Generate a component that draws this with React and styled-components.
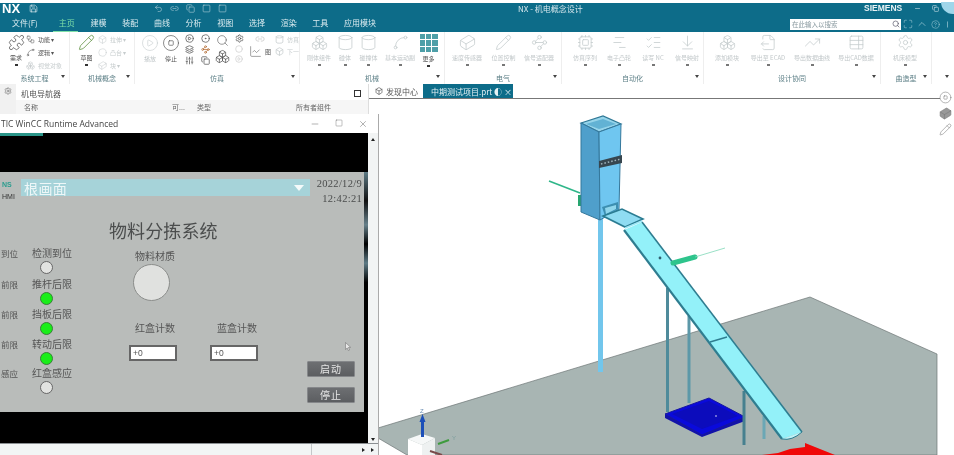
import React from 'react';
import styled, { createGlobalStyle } from 'styled-components';
import {
  Puzzle, Pencil, Square, Search, Settings, Box, Boxes, Spline, Cylinder, Cuboid, Workflow,
  ChartLine, ChartNoAxesGantt, Cpu, Waypoints, ListChecks, ArrowDownToLine, FileOutput,
  TrendingUp, TableProperties, Wrench, ChevronUp, Maximize, CircleHelp, Circle, Save, Undo2, Minus, X,
  Sliders, Link2, CircleDot, CirclePlay, CircleStop, Copy, Layers,
} from 'lucide-react';

const TEAL = '#0d6c89';
const CJK = '"Noto Sans CJK SC", "Liberation Sans", sans-serif';
const SERIF = '"Liberation Serif", "Noto Sans CJK SC", serif';

const GlobalStyle = createGlobalStyle`
  html, body { margin: 0; padding: 0; background: #fff; overflow: hidden; }
  #root { width: 954px; height: 455px; }
  * { box-sizing: border-box; }
`;

const Page = styled.div`
  width: 954px;
  height: 455px;
  padding-top: 3px;
  display: flex;
  flex-direction: column;
  overflow: hidden;
  background: #fff;
  font-family: ${CJK};
  filter: blur(0.45px);
`;

/* header */
const TitleBar = styled.div`
  height: 13px;
  flex: none;
  background: ${TEAL};
  display: flex;
  align-items: center;
  padding-bottom: 3px;
  color: #fff;
`;
const TitleLeft = styled.div`
  width: 518px;
  display: flex;
  align-items: center;
  padding-left: 2px;
`;
const Logo = styled.span`
  font: bold 13px "Liberation Sans", sans-serif;
  width: 27px;
`;
const QuickIcons = styled.div`
  display: flex;
  gap: 7px;
  margin-left: 116px;
  opacity: 0.75;
`;
const AppTitle = styled.div`
  width: 346px;
  font-size: 8px;
  color: #d5e6ec;
`;
const Brand = styled.div`
  font: bold 8.5px "Liberation Sans", sans-serif;
  width: 50px;
  color: #e8f2f5;
`;
const WinControls = styled.div`
  display: flex;
  gap: 11px;
  align-items: center;
  color: #cfe2e8;
`;
const Sphere = styled.div`
  position: absolute;
  top: 2px;
  right: 0;
  width: 13px;
  height: 12px;
  border-radius: 0 0 0 13px;
  background: #9fd6ea;
`;
const MenuBar = styled.div`
  height: 16px;
  flex: none;
  background: ${TEAL};
  display: flex;
  align-items: center;
  padding-left: 12px;
  color: #dcecf0;
  font-size: 8px;
`;
const MenuItem = styled.div`
  height: 16px;
  line-height: 14px;
  margin-right: ${p => p.$gap || 15.7}px;
  position: relative;
  color: ${p => (p.$active ? '#7fe0a8' : 'inherit')};
  &::after {
    content: '';
    display: ${p => (p.$active ? 'block' : 'none')};
    position: absolute;
    left: -6px;
    right: -3px;
    bottom: 0;
    height: 1px;
    background: #7fe0a8;
  }
`;
const MenuSpacer = styled.div`
  flex: 1;
`;
const SearchBox = styled.div`
  width: 111px;
  height: 11px;
  background: #fff;
  color: #8a9aa0;
  font-size: 6.5px;
  line-height: 11px;
  padding: 0 1px 0 2px;
  display: flex;
  justify-content: space-between;
  align-items: center;
`;
const HeadIcons = styled.div`
  display: flex;
  align-items: center;
  gap: 3px;
  margin: 0 2px 0 2px;
  width: 49px;
  justify-content: space-between;
  color: #b9dbe4;
`;

/* ribbon */
const Ribbon = styled.div`
  height: 52px;
  flex: none;
  display: flex;
  background: #fff;
`;
const Group = styled.div`
  width: ${p => p.$w}px;
  flex: none;
  display: flex;
  flex-direction: column;
  border-right: 1px solid ${p => (p.$plain ? 'transparent' : '#eeeeee')};
`;
const Tools = styled.div`
  height: 39px;
  display: flex;
  padding-left: ${p => p.$pad || 0}px;
`;
const GroupFoot = styled.div`
  height: 13px;
  display: flex;
  align-items: center;
  justify-content: center;
  position: relative;
  font-size: 7px;
  color: #5c7f86;
`;
const FootCaret = styled.span`
  position: absolute;
  right: 4px;
  top: 4px;
  width: 0;
  height: 0;
  border-left: 2px solid transparent;
  border-right: 2px solid transparent;
  border-top: 3px solid #444;
`;
const Tool = styled.div`
  width: ${p => p.$w || 34}px;
  flex: none;
  display: flex;
  flex-direction: column;
  align-items: center;
  padding-top: 2px;
  color: ${p => (p.$off ? '#c4cbcd' : '#555')};
`;
const ToolLabel = styled.div`
  margin-top: 3px;
  font-size: 6px;
  line-height: 8px;
  white-space: nowrap;
  color: ${p => (p.$off ? '#c2c8ca' : '#555')};
`;
const ToolCaret = styled.div`
  margin-top: 2px;
  width: 3px;
  height: 2px;
  background: ${p => (p.$off ? '#777' : '#333')};
`;
const SmallCol = styled.div`
  display: flex;
  flex-direction: column;
  gap: 3px;
  padding-top: 2px;
  width: ${p => p.$w}px;
`;
const SmallRow = styled.div`
  display: flex;
  align-items: center;
  gap: 3px;
  height: 10px;
  font-size: 6px;
  white-space: nowrap;
  color: ${p => (p.$off ? '#c6cccd' : '#555')};
`;
const IconCluster = styled.div`
  width: ${p => p.$w}px;
  display: grid;
  grid-template-columns: repeat(${p => p.$cols}, 1fr);
  gap: 2px;
  padding-top: 2px;
  justify-items: center;
  align-content: start;
  color: #555;
`;
const MoreGrid = styled.div`
  width: 18px;
  height: 18px;
  display: grid;
  grid-template-columns: repeat(3, 1fr);
  gap: 1px;
`;
const MoreCell = styled.span`
  background: #4e9fa8;
`;

/* work area */
const Workspace = styled.div`
  flex: 1;
  min-height: 0;
  display: flex;
  position: relative;
`;
const LeftPanel = styled.div`
  width: 369px;
  flex: none;
  display: flex;
`;
const Rail = styled.div`
  width: 16px;
  flex: none;
  background: #f1f1f1;
  display: flex;
  justify-content: center;
  padding-top: 3px;
  color: #777;
`;
const Navigator = styled.div`
  flex: 1;
  display: flex;
  flex-direction: column;
  padding-top: 2px;
  border-right: 1px solid #ddd;
`;
const NavHead = styled.div`
  height: 14px;
  display: flex;
  align-items: center;
  justify-content: space-between;
  padding: 0 7px 0 5px;
  font-size: 8px;
  color: #555;
`;
const NavBox = styled.span`
  width: 7px;
  height: 7px;
  border: 1px solid #333;
`;
const NavCols = styled.div`
  height: 14px;
  display: grid;
  grid-template-columns: 148px 25px 99px 1fr;
  align-items: center;
  padding-left: 8px;
  background: #f6f6f6;
  font-size: 7px;
  color: #666;
`;

/* floating WinCC window */
const HmiWindow = styled.div`
  position: absolute;
  left: 0;
  top: 30px;
  width: 379px;
  height: 341px;
  background: #f4f6f6;
  border-right: 1px solid #aaa;
  display: flex;
  flex-direction: column;
  overflow: hidden;
`;
const WinTitle = styled.div`
  height: 19px;
  flex: none;
  background: #fff;
  display: flex;
  align-items: center;
  justify-content: space-between;
  padding: 0 10px 0 1px;
  font: 8.5px "Open Sans", sans-serif;
  color: #444;
`;
const WinButtons = styled.div`
  display: flex;
  gap: 15px;
  color: #444;
`;
const WinMiddle = styled.div`
  height: 310px;
  flex: none;
  display: flex;
`;
const WinContent = styled.div`
  width: 368px;
  background: #000;
  display: flex;
  flex-direction: column;
`;
const Progress = styled.div`
  width: 43px;
  height: 3px;
  background: #2a9488;
`;
const BlackBand = styled.div`
  height: ${p => p.$h}px;
  flex: none;
  background: #000;
`;
const HmiRow = styled.div`
  height: 240px;
  flex: none;
  display: flex;
`;
const EdgeStrip = styled.div`
  flex: 1;
  background: linear-gradient(180deg, #5d7a85 0, #111 12%, #66808a 22%, #000 30%, #5d7a85 38%, #000 46%, #000 100%);
`;
const HmiScreen = styled.div`
  width: 364px;
  background: #b9bcba;
  position: relative;
  overflow: hidden;
  font-family: ${SERIF};
  color: #4a4c4c;
`;
const HmiHeader = styled.div`
  display: flex;
  align-items: flex-start;
  padding: 7px 2px 0 2px;
  height: 42px;
`;
const BrandBlock = styled.div`
  width: 19px;
  font: 7px/12px "Liberation Sans", sans-serif;
`;
const BrandTop = styled.div`
  color: #2c9d8f;
  font-weight: bold;
`;
const BrandBottom = styled.div`
  color: #333;
`;
const ScreenSelect = styled.div`
  width: 289px;
  height: 17px;
  background: #a6d3d9;
  color: #eef7f8;
  display: flex;
  align-items: center;
  justify-content: space-between;
  padding: 0 6px 0 3px;
  font: 14px ${CJK};
  letter-spacing: 0.4px;
`;
const SelectArrow = styled.span`
  width: 0;
  height: 0;
  border-left: 5px solid transparent;
  border-right: 5px solid transparent;
  border-top: 6px solid #f4fafa;
`;
const Clock = styled.div`
  flex: 1;
  text-align: right;
  font-size: 10.5px;
  line-height: 15px;
  margin-top: -3px;
  letter-spacing: 0.3px;
`;
const HmiTitle = styled.div`
  height: 33px;
  padding-left: 109px;
  font: 18px/33px ${CJK};
  color: #4b4d4d;
  letter-spacing: 0.1px;
`;
const HmiBody = styled.div`
  display: flex;
  align-items: flex-start;
`;
const CutColumn = styled.div`
  width: 18px;
  display: flex;
  flex-direction: column;
  align-items: flex-end;
`;
const LampColumn = styled.div`
  width: 58px;
  margin-left: 5px;
  display: flex;
  flex-direction: column;
  align-items: center;
`;
const LampCell = styled.div`
  height: ${p => p.$h}px;
  display: flex;
  flex-direction: column;
  align-items: center;
  flex: none;
`;
const LampLabel = styled.div`
  font: 10px/12px ${CJK};
  white-space: nowrap;
  color: #555;
  margin-left: ${p => p.$shift || 0}px;
`;
const CutLabel = styled.div`
  font: 8.5px/12px ${CJK};
  white-space: nowrap;
  color: #555;
`;
const Lamp = styled.div`
  width: 13px;
  height: 13px;
  margin: 2px 11px 0 0;
  border-radius: 50%;
  border: 1px solid ${p => (p.$on ? '#3a7d3a' : '#666')};
  background: ${p => (p.$on ? '#19ee19' : '#e2e3e1')};
`;
const CenterColumn = styled.div`
  width: 129px;
  margin-left: 48px;
  display: flex;
  flex-direction: column;
`;
const Material = styled.div`
  width: 48px;
  margin-left: 2px;
  display: flex;
  flex-direction: column;
  align-items: center;
  margin-top: 3px;
`;
const BigLamp = styled.div`
  width: 37px;
  height: 37px;
  margin: 2px 8px 0 0;
  border-radius: 50%;
  background: #e0e1df;
  border: 1px solid #8b8d8b;
`;
const Counters = styled.div`
  display: flex;
  gap: 33px;
  margin-top: 21px;
`;
const Counter = styled.div`
  width: 48px;
  display: flex;
  flex-direction: column;
  align-items: center;
  gap: 11px;
`;
const CountField = styled.div`
  width: 48px;
  height: 16px;
  background: #fff;
  border: 2px solid #666;
  font: 8.5px/12px "Liberation Sans", sans-serif;
  color: #555;
  padding-left: 2px;
`;
const ButtonColumn = styled.div`
  margin: 114px 0 0 49px;
  display: flex;
  flex-direction: column;
  gap: 10px;
`;
const HmiButton = styled.div`
  width: 48px;
  height: 16px;
  background: linear-gradient(#6d6f72, #5c5e61);
  border: 1px solid #85878a;
  border-radius: 1px;
  color: #e6e6e6;
  font: 10px/14px ${CJK};
  text-align: center;
  letter-spacing: 1px;
`;
const Pointer = styled.svg`
  position: absolute;
  left: 345px;
  top: 170px;
`;
const VScroll = styled.div`
  flex: 1;
  background: #f2f4f4;
  display: flex;
  flex-direction: column;
  justify-content: space-between;
  align-items: center;
  padding: 5px 0 2px;
`;
const ScrollUp = styled.span`
  width: 0;
  height: 0;
  border-left: 2.5px solid transparent;
  border-right: 2.5px solid transparent;
  border-bottom: 3px solid #222;
`;
const ScrollDown = styled(ScrollUp)`
  border-bottom: 0;
  border-top: 3px solid #222;
`;
const HScroll = styled.div`
  height: 12px;
  flex: none;
  background: #f2f5f5;
  border-top: 1px solid #8a8f92;
  display: flex;
  align-items: center;
  padding-left: 311px;
`;
const HScrollEnd = styled.div`
  flex: 1;
  height: 100%;
  border-left: 1px solid #c4c8ca;
  display: flex;
  justify-content: flex-end;
  align-items: center;
  gap: 6px;
  padding-right: 4px;
`;
const ScrollRight = styled.span`
  width: 0;
  height: 0;
  border-top: 2.5px solid transparent;
  border-bottom: 2.5px solid transparent;
  border-left: 3px solid #222;
`;

/* graphics window */
const Viewport = styled.div`
  flex: 1;
  min-width: 0;
  display: flex;
  flex-direction: column;
  position: relative;
`;
const TabStrip = styled.div`
  height: 15px;
  flex: none;
  display: flex;
  align-items: stretch;
  border-bottom: 1px solid #777;
  margin-right: 14px;
  padding-left: 3px;
  font-size: 8px;
  color: #555;
`;
const TabItem = styled.div`
  display: flex;
  align-items: center;
  gap: ${p => (p.$active ? 5 : 3)}px;
  height: 14px;
  padding: 0 3px;
  width: ${p => p.$w}px;
  background: ${p => (p.$active ? TEAL : 'transparent')};
  color: ${p => (p.$active ? '#e6f2f5' : 'inherit')};
  white-space: nowrap;
  overflow: hidden;
`;
const Scene = styled.svg`
  display: block;
  width: 585px;
  height: 356px;
  flex: none;
`;
const SideTools = styled.div`
  position: absolute;
  right: 2px;
  top: 7px;
  display: flex;
  flex-direction: column;
  gap: 3px;
  color: #777;
`;

const IC = { size: 9, strokeWidth: 1.4 };
const BIG = { size: 17, strokeWidth: 1.1 };

const RibbonTool = ({ icon: Icon, label, off = true, w }) => (
  <Tool $off={off} $w={w}>
    <Icon {...BIG} />
    <ToolLabel $off={off}>{label}</ToolLabel>
    <ToolCaret $off={off} />
  </Tool>
);

const SmallTool = ({ icon: Icon, label, off }) => (
  <SmallRow $off={off}>
    <Icon {...IC} />
    {label}
  </SmallRow>
);

const lampRows = [
  { cut: '到位', label: '检测到位', on: false, h: 31 },
  { cut: '前限', label: '推杆后限', on: true, h: 29.5 },
  { cut: '前限', label: '挡板后限', on: true, h: 30 },
  { cut: '前限', label: '转动后限', on: true, h: 29 },
  { cut: '感应', label: '红盒感应', on: false, h: 30 },
];

const menus = ['建模', '装配', '曲线', '分析', '视图', '选择', '渲染', '工具', '应用模块'];

const Scene3D = () => (
  <Scene viewBox="369 99 585 356">
    {/* floor */}
    <polygon points="810,297 937,354 937,455 407,455 378,438 378,428" fill="#a8b5b3" stroke="#6d7675" strokeWidth="0.7" />

    {/* posts behind the chute */}
    <line x1="600.5" y1="218" x2="600.5" y2="372" stroke="#72c6ec" strokeWidth="5" />
    <line x1="667.5" y1="288" x2="667.5" y2="412" stroke="#4f8b9b" strokeWidth="3" />
    <line x1="689" y1="316" x2="689" y2="403" stroke="#5c98a8" strokeWidth="3" />

    {/* blue tray */}
    <polygon points="665,414 665,418 702,437 745,421 745,417 702,433" fill="#1212a8" />
    <polygon points="665,414 709,398 745,417 702,435" fill="#0a0adb" stroke="#1616a0" strokeWidth="1" />
    <polygon points="672,414 709,401 738,416 702,429" fill="#0c0cbc" />
    <circle cx="716" cy="416" r="1" fill="#8c8ce0" />

    <line x1="744" y1="391" x2="744" y2="445" stroke="#47808f" strokeWidth="3" />
    <line x1="764" y1="416" x2="764" y2="439" stroke="#6ba7b5" strokeWidth="3" />

    {/* red tray */}
    <polygon points="762,455 778,453 790,449 805,447 805,443 835,455" fill="#f00808" />

    {/* left sensor */}
    <line x1="549" y1="181" x2="580" y2="193" stroke="#2fb689" strokeWidth="1.6" />
    <rect x="578" y="195" width="3" height="11" fill="#27a56f" />

    {/* hopper */}
    <polygon points="581,123 603,116 621,124 599,132" fill="#96d4ea" stroke="#2f7896" strokeWidth="1.2" />
    <polygon points="586,124 603,119 616,124 599,129" fill="#62b2d4" />
    <polygon points="581,123 599,132 600,220 581,212" fill="#4f9fcb" stroke="#35789c" strokeWidth="1" />
    <polygon points="599,132 621,124 619,209 600,220" fill="#6fc6f0" stroke="#35789c" strokeWidth="1" />
    <polygon points="602,207 618,202 618,209 605,216" fill="#3d8fb1" />
    <polygon points="605,208 616,205 616,209 606,214" fill="#8fd6ec" />
    <polygon points="599,161 622,155 622,163 599,168" fill="#37464f" />
    <line x1="601" y1="164" x2="621" y2="159" stroke="#9fb4bd" strokeWidth="1.5" strokeDasharray="1.5 2" />

    {/* upper chute */}
    <polygon points="603,216 622,209 643,219 625,227" fill="#8fdcf2" stroke="#2b7c92" strokeWidth="1.6" />

    {/* long chute */}
    <polygon points="624,230 642,222 802,432 782,439" fill="#93f1f9" />
    <line x1="624" y1="230" x2="782" y2="439" stroke="#2f7d90" strokeWidth="2.2" />
    <line x1="642" y1="222" x2="802" y2="432" stroke="#2f7d90" strokeWidth="1.6" />
    <line x1="625" y1="228" x2="642" y2="221" stroke="#9be6f5" strokeWidth="1.5" />
    <line x1="710" y1="342" x2="727" y2="337" stroke="#2f7d90" strokeWidth="1.4" />
    <path d="M782 439 Q792 441 802 432" fill="#bff3f8" stroke="#2f7d90" strokeWidth="1" />
    <circle cx="660" cy="258" r="1.4" fill="#2f5f70" />

    {/* right sensor */}
    <line x1="673" y1="263" x2="695" y2="257" stroke="#2ec48c" strokeWidth="5" strokeLinecap="round" />
    <line x1="695" y1="257" x2="725" y2="248" stroke="#7fd8b8" strokeWidth="0.8" />

    {/* triad */}
    <polygon points="408,439 422,434 435,438 422,445" fill="#f6f8f8" />
    <polygon points="408,439 422,445 422,455 408,455" fill="#fff" />
    <polygon points="422,445 435,438 435,455 422,455" fill="#eef1f1" />
    <line x1="422.5" y1="437" x2="422.5" y2="420" stroke="#1c4fb8" strokeWidth="3" />
    <polygon points="422.5,414 419.5,422 425.5,422" fill="#1c4fb8" />
    <text x="420" y="413" fontSize="6" fontFamily="Liberation Sans" fill="#6b8fb5">Z</text>
    <line x1="438" y1="444" x2="449" y2="440" stroke="#3e9b3e" strokeWidth="2" />
    <text x="452" y="440" fontSize="6" fontFamily="Liberation Sans" fill="#7d9c9c">Y</text>
    <line x1="430" y1="451" x2="442" y2="455" stroke="#7a4a4a" strokeWidth="2" />
  </Scene>
);

const App = () => (
  <Page>
    <GlobalStyle />
    <Sphere />
    <TitleBar>
      <TitleLeft>
        <Logo>NX</Logo>
        <Save size={9} strokeWidth={1.5} />
        <QuickIcons>
          <Undo2 {...IC} />
          <Link2 {...IC} />
          <Copy {...IC} />
          <Square {...IC} />
          <Square {...IC} />
        </QuickIcons>
      </TitleLeft>
      <AppTitle>NX - 机电概念设计</AppTitle>
      <Brand>SIEMENS</Brand>
      <WinControls>
        <Minus size={7} />
        <Copy size={7} />
      </WinControls>
    </TitleBar>
    <MenuBar>
      <MenuItem $gap={21}>文件(F)</MenuItem>
      <MenuItem $active>主页</MenuItem>
      {menus.map(m => <MenuItem key={m}>{m}</MenuItem>)}
      <MenuSpacer />
      <SearchBox>在此输入以搜索<Search size={8} color="#556" /></SearchBox>
      <HeadIcons>
        <Maximize size={10} strokeWidth={1.2} />
        <ChevronUp size={12} strokeWidth={1.2} />
        <CircleHelp size={9} strokeWidth={1.2} />
        <Minus size={9} strokeWidth={1.6} transform="rotate(90)" />
      </HeadIcons>
    </MenuBar>

    <Ribbon>
      <Group $w={70}>
        <Tools $pad={6}>
          <Tool $w={20}>
            <Puzzle {...BIG} />
            <ToolLabel>需求</ToolLabel>
            <ToolCaret />
          </Tool>
          <SmallCol $w={42}>
            <SmallTool icon={Workflow} label="功能 ▾" />
            <SmallTool icon={Spline} label="逻辑 ▾" />
            <SmallTool icon={Boxes} label="视觉对象" off />
          </SmallCol>
        </Tools>
        <GroupFoot>系统工程<FootCaret /></GroupFoot>
      </Group>
      <Group $w={65}>
        <Tools $pad={5}>
          <Tool $w={23}>
            <Pencil {...BIG} color="#5c8f3c" />
            <ToolLabel>草图</ToolLabel>
            <ToolCaret />
          </Tool>
          <SmallCol $w={34}>
            <SmallTool icon={Box} label="拉伸 ▾" off />
            <SmallTool icon={Circle} label="凸台 ▾" off />
            <SmallTool icon={Cuboid} label="块 ▾" off />
          </SmallCol>
        </Tools>
        <GroupFoot>机械概念<FootCaret /></GroupFoot>
      </Group>
      <Group $w={165}>
        <Tools $pad={5}>
          <Tool $w={20} $off>
            <CirclePlay size={18} strokeWidth={0.8} />
            <ToolLabel $off>播放</ToolLabel>
          </Tool>
          <Tool $w={22}>
            <CircleStop size={18} strokeWidth={0.9} />
            <ToolLabel>停止</ToolLabel>
          </Tool>
          <IconCluster $w={30} $cols={2}>
            <CirclePlay size={9} />
            <CircleDot size={9} />
            <Layers size={9} />
            <Waypoints size={9} color="#b5703a" />
            <Sliders size={9} />
            <Copy size={9} />
          </IconCluster>
          <IconCluster $w={21} $cols={1}>
            <Search size={13} strokeWidth={1.1} />
            <Boxes size={15} strokeWidth={1.2} />
          </IconCluster>
          <IconCluster $w={12} $cols={1}>
            <Settings size={9} />
            <Circle size={8} color="#ccc" />
            <CirclePlay size={8} color="#ccc" />
          </IconCluster>
          <IconCluster $w={30} $cols={1}>
            <Link2 size={10} color="#ccc" />
            <SmallRow><ChartLine size={13} strokeWidth={1} />图</SmallRow>
          </IconCluster>
          <IconCluster $w={22} $cols={1}>
            <SmallRow $off><Cylinder size={9} />仿真</SmallRow>
            <SmallRow $off><Box size={9} />下一</SmallRow>
          </IconCluster>
        </Tools>
        <GroupFoot>仿真<FootCaret /></GroupFoot>
      </Group>
      <Group $w={145}>
        <Tools $pad={3}>
          <RibbonTool icon={Boxes} label="刚体组件" w={32} />
          <RibbonTool icon={Cylinder} label="碰体" w={20} />
          <RibbonTool icon={Cylinder} label="碰撞体" w={27} />
          <RibbonTool icon={Spline} label="基本运动副" w={36} />
          <Tool $w={21}>
            <MoreGrid>{Array.from({ length: 9 }, (_, i) => <MoreCell key={i} />)}</MoreGrid>
            <ToolLabel>更多</ToolLabel>
            <ToolCaret />
          </Tool>
        </Tools>
        <GroupFoot>机械<FootCaret /></GroupFoot>
      </Group>
      <Group $w={117}>
        <Tools $pad={2}>
          <RibbonTool icon={Cuboid} label="速度传感器" w={40} />
          <RibbonTool icon={Pencil} label="位置控制" w={33} />
          <RibbonTool icon={Waypoints} label="信号适配器" w={38} />
        </Tools>
        <GroupFoot>电气<FootCaret /></GroupFoot>
      </Group>
      <Group $w={142}>
        <Tools $pad={6}>
          <RibbonTool icon={Cpu} label="仿真序列" w={34} />
          <RibbonTool icon={ChartNoAxesGantt} label="电子凸轮" w={34} />
          <RibbonTool icon={ListChecks} label="读写 NC" w={34} />
          <RibbonTool icon={ArrowDownToLine} label="信号映射" w={34} />
        </Tools>
        <GroupFoot>自动化<FootCaret /></GroupFoot>
      </Group>
      <Group $w={177}>
        <Tools $pad={4}>
          <RibbonTool icon={Boxes} label="添加模块" w={38} />
          <RibbonTool icon={FileOutput} label="导出至 ECAD" w={44} />
          <RibbonTool icon={TrendingUp} label="导出数据曲线" w={44} />
          <RibbonTool icon={TableProperties} label="导出CAD数据" w={44} />
        </Tools>
        <GroupFoot>设计协同<FootCaret /></GroupFoot>
      </Group>
      <Group $w={51}>
        <Tools $pad={5}>
          <RibbonTool icon={Settings} label="机床模型" w={38} />
        </Tools>
        <GroupFoot>曲造型<FootCaret /></GroupFoot>
      </Group>
      <Group $w={22} $plain>
        <Tools />
        <GroupFoot><FootCaret /></GroupFoot>
      </Group>
    </Ribbon>

    <Workspace>
      <LeftPanel>
        <Rail><Settings size={8} /></Rail>
        <Navigator>
          <NavHead>机电导航器<NavBox /></NavHead>
          <NavCols>
            <span>名称</span>
            <span>可...</span>
            <span>类型</span>
            <span>所有者组件</span>
          </NavCols>
        </Navigator>
      </LeftPanel>

      <Viewport>
        <TabStrip>
          <TabItem $w={51}><Box size={8} />发现中心</TabItem>
          <TabItem $w={90} $active><Wrench size={6} />中期测试项目.prt ◐ ×</TabItem>
        </TabStrip>
        <Scene3D />
        <SideTools>
          <CircleStop size={13} strokeWidth={1} />
          <Cuboid size={13} fill="#999" strokeWidth={1} />
          <Pencil size={13} strokeWidth={1} />
        </SideTools>
      </Viewport>

      <HmiWindow>
        <WinTitle>
          TIC WinCC Runtime Advanced
          <WinButtons>
            <Minus size={10} strokeWidth={1} />
            <Square size={8} strokeWidth={1} />
            <X size={10} strokeWidth={1} />
          </WinButtons>
        </WinTitle>
        <WinMiddle>
          <WinContent>
            <Progress />
            <BlackBand $h={36} />
            <HmiRow>
              <HmiScreen>
                <HmiHeader>
                  <BrandBlock>
                    <BrandTop>NS</BrandTop>
                    <BrandBottom>HMI</BrandBottom>
                  </BrandBlock>
                  <ScreenSelect>根画面<SelectArrow /></ScreenSelect>
                  <Clock>2022/12/9<br />12:42:21</Clock>
                </HmiHeader>
                <HmiTitle>物料分拣系统</HmiTitle>
                <HmiBody>
                  <CutColumn>
                    {lampRows.map((r, i) => (
                      <LampCell key={i} $h={r.h}><CutLabel>{r.cut}</CutLabel></LampCell>
                    ))}
                  </CutColumn>
                  <LampColumn>
                    {lampRows.map(r => (
                      <LampCell key={r.label} $h={r.h}>
                        <LampLabel>{r.label}</LampLabel>
                        <Lamp $on={r.on} />
                      </LampCell>
                    ))}
                  </LampColumn>
                  <CenterColumn>
                    <Material>
                      <LampLabel>物料材质</LampLabel>
                      <BigLamp />
                    </Material>
                    <Counters>
                      <Counter><LampLabel $shift={4}>红盒计数</LampLabel><CountField>+0</CountField></Counter>
                      <Counter><LampLabel $shift={6}>蓝盒计数</LampLabel><CountField>+0</CountField></Counter>
                    </Counters>
                  </CenterColumn>
                  <ButtonColumn>
                    <HmiButton>启动</HmiButton>
                    <HmiButton>停止</HmiButton>
                  </ButtonColumn>
                </HmiBody>
                <Pointer width="6" height="9" viewBox="0 0 6 9">
                  <path d="M0.5 0.5 L0.5 7.5 L2.2 6 L3.4 8.6 L4.6 8 L3.4 5.5 L5.6 5.3 Z" fill="#e8e8e8" stroke="#666" strokeWidth="0.5" />
                </Pointer>
              </HmiScreen>
              <EdgeStrip />
            </HmiRow>
            <BlackBand $h={31} />
          </WinContent>
          <VScroll><ScrollUp /><ScrollDown /></VScroll>
        </WinMiddle>
        <HScroll><HScrollEnd><ScrollRight /><ScrollRight /></HScrollEnd></HScroll>
      </HmiWindow>
    </Workspace>
  </Page>
);

export default App;
